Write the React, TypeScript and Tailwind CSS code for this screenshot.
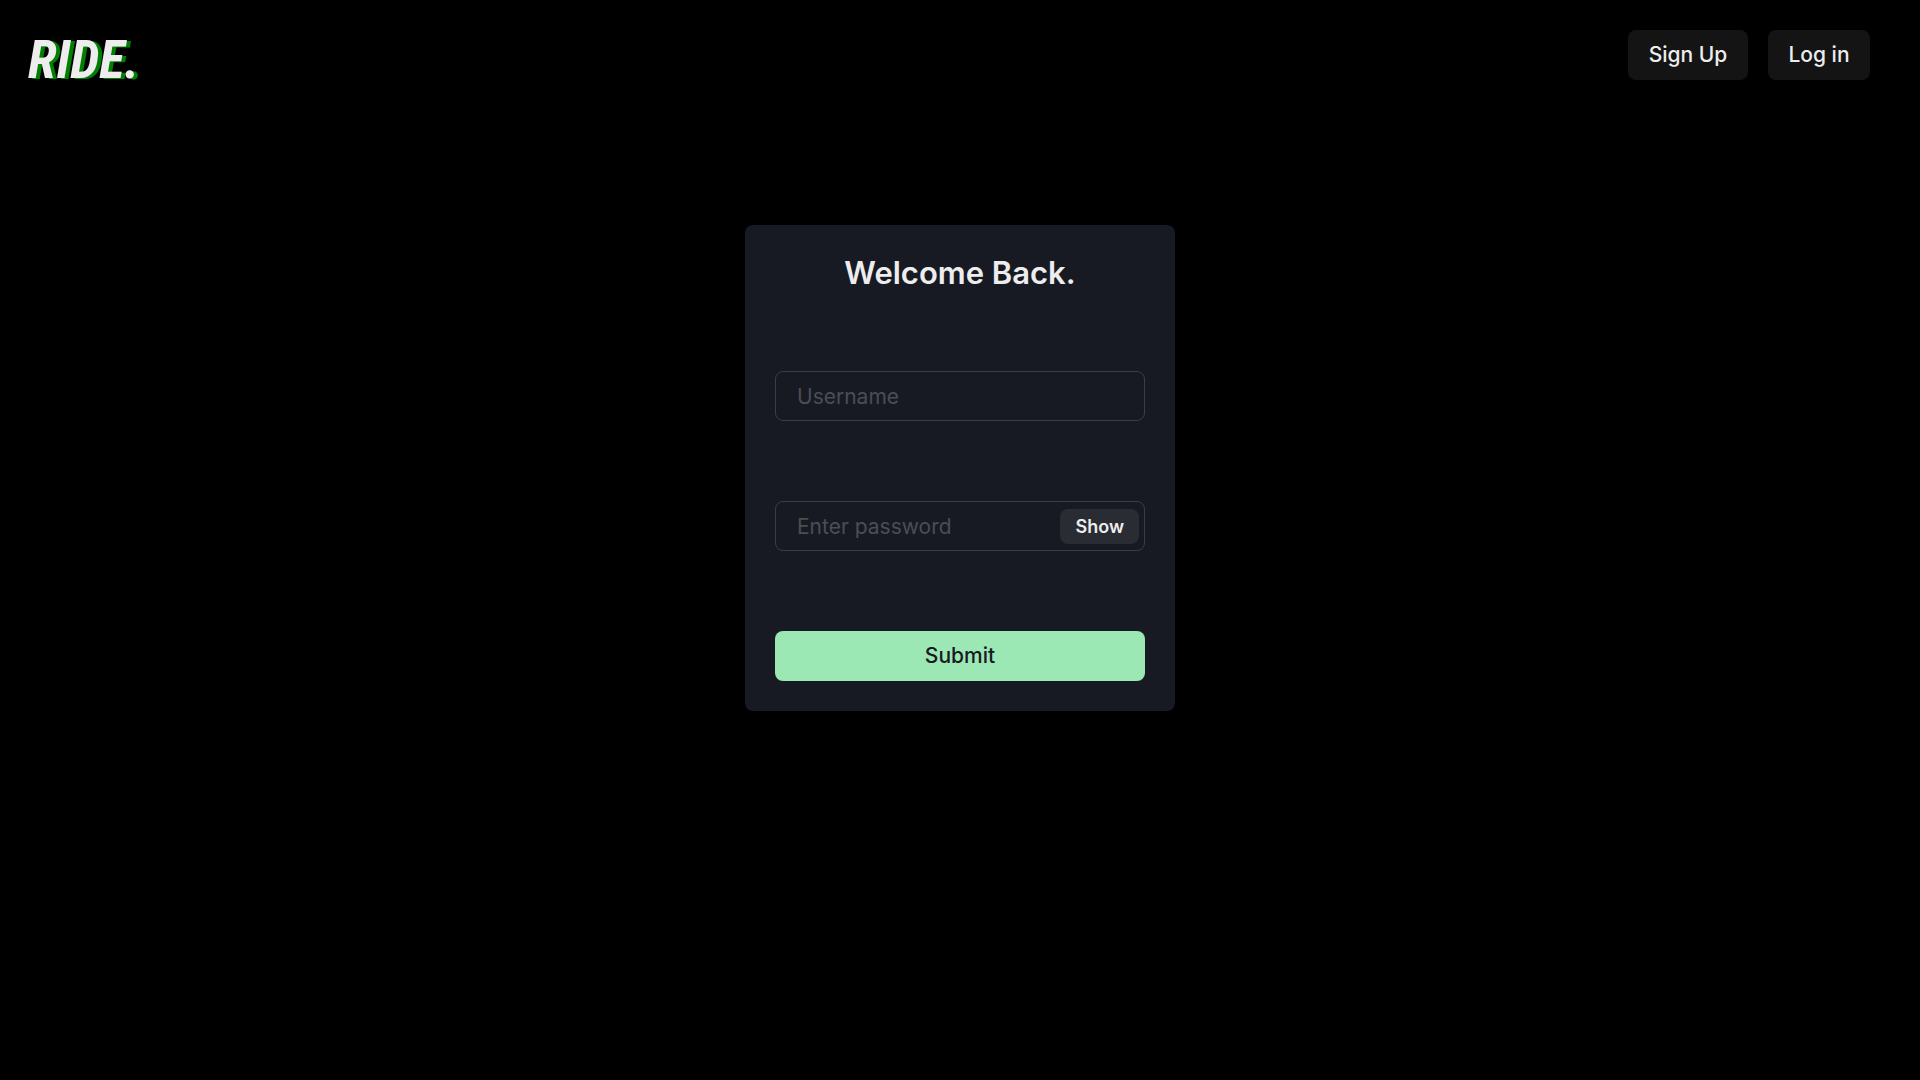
import { useState } from "react";

const navButton =
  "h-[50px] cursor-pointer rounded-lg bg-[#141414] text-[21px] font-medium text-[#ededed]";
const field =
  "h-[50px] w-full rounded-lg border border-[#3b3d45] bg-transparent px-[21px] text-[21px] text-[#ededed] outline-none placeholder:text-[#4b4d55]";

export default function App() {
  const [visible, setVisible] = useState(false);

  return (
    <div className="min-h-screen bg-black font-['Inter',sans-serif]">
      <header className="flex items-start justify-between pt-[30px] pr-[50px] pl-7">
        <a
          href="#home"
          className="font-['Roboto_Condensed','Roboto',sans-serif] text-[53px] leading-[60px] font-bold text-[#ededed] italic [text-shadow:4px_1px_0_#008000]"
        >
          RIDE.
        </a>
        <nav className="flex gap-5">
          <button type="button" className={`${navButton} w-[120px]`}>
            Sign Up
          </button>
          <button type="button" className={`${navButton} w-[102px]`}>
            Log in
          </button>
        </nav>
      </header>

      <main className="flex justify-center px-5 pt-[135px]">
        <form
          className="w-full max-w-[430px] rounded-lg bg-[#181a23] p-[30px]"
          onSubmit={(event) => event.preventDefault()}
        >
          <h1 className="text-center text-[31px] leading-9 font-semibold text-[#ededed]">
            Welcome Back.
          </h1>
          <div className="mt-20 flex flex-col gap-20">
            <input
              type="text"
              aria-label="Username"
              placeholder="Username"
              className={field}
            />
            <div className="relative">
              <input
                type={visible ? "text" : "password"}
                aria-label="Password"
                placeholder="Enter password"
                className={field}
              />
              <button
                type="button"
                onClick={() => setVisible(!visible)}
                className="absolute top-2 right-1.5 h-[35px] cursor-pointer rounded-lg bg-[#2a2c34] px-[15px] text-lg font-semibold text-[#ededed]"
              >
                {visible ? "Hide" : "Show"}
              </button>
            </div>
            <button
              type="submit"
              className="h-[50px] w-full cursor-pointer rounded-lg bg-[#9ce8b5] text-[21px] font-medium text-[#181a23]"
            >
              Submit
            </button>
          </div>
        </form>
      </main>
    </div>
  );
}
